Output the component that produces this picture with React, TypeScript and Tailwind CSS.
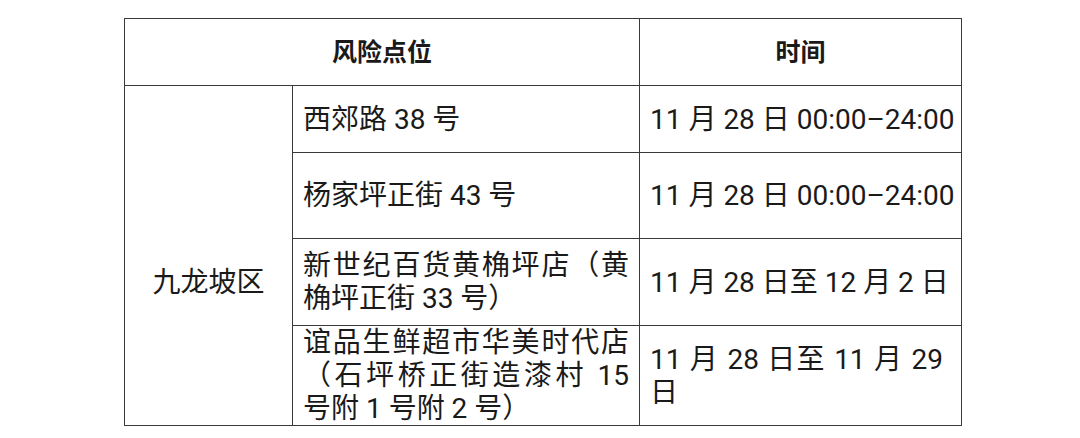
import React from 'react';

// Risk location table
const rows: { place: string[]; time: string[]; h: string; timePad?: string }[] = [
  { place: ['西郊路 38 号'], time: ['11 月 28 日 00:00–24:00'], h: 'h-[67px]' },
  { place: ['杨家坪正街 43 号'], time: ['11 月 28 日 00:00–24:00'], h: 'h-[86px]' },
  { place: ['新世纪百货黄桷坪店（黄', '桷坪正街 33 号）'], time: ['11 月 28 日至 12 月 2 日'], h: 'h-[87px]' },
  {
    place: ['谊品生鲜超市华美时代店', '（石坪桥正街造漆村 15', '号附 1 号附 2 号）'],
    time: ['11 月 28 日至 11 月 29', '日'],
    h: 'h-[99px]',
    timePad: 'pr-[18px]',
  },
];

const Lines: React.FC<{ lines: string[] }> = ({ lines }) => (
  <>
    {lines.map((line, i) => (
      <span
        key={i}
        className={`block whitespace-nowrap ${i < lines.length - 1 ? 'text-justify [text-align-last:justify]' : ''}`}
      >
        {line}
      </span>
    ))}
  </>
);

export default function App() {
  return (
    <div
      className="w-[1080px] h-[438px] bg-white pt-[18px] pl-[124px] text-[#1a1a1a]"
      style={{ fontFamily: 'Roboto, "Noto Sans CJK SC", sans-serif' }}
    >
      <table className="table-fixed border-collapse w-[837px] text-[28px] leading-[33px]">
        <colgroup>
          <col className="w-[168px]" />
          <col className="w-[347px]" />
          <col className="w-[322px]" />
        </colgroup>
        <thead>
          <tr className="h-[67px]">
            <th colSpan={2} className="border border-[#3a3a3a] text-[25px] font-bold text-center align-middle">
              风险点位
            </th>
            <th className="border border-[#3a3a3a] text-[25px] font-bold text-center align-middle">时间</th>
          </tr>
        </thead>
        <tbody>
          {rows.map((r, i) => (
            <tr key={i} className={r.h}>
              {i === 0 && (
                <td rowSpan={4} className="border border-[#3a3a3a] text-center align-middle pt-[54px] font-normal">
                  九龙坡区
                </td>
              )}
              <td className="border border-[#3a3a3a] px-[10px] py-0 align-middle">
                <Lines lines={r.place} />
              </td>
              <td className={`border border-[#3a3a3a] pl-[10px] py-0 align-middle ${r.timePad ?? 'pr-[10px]'}`}>
                <Lines lines={r.time} />
              </td>
            </tr>
          ))}
        </tbody>
      </table>
    </div>
  );
}
